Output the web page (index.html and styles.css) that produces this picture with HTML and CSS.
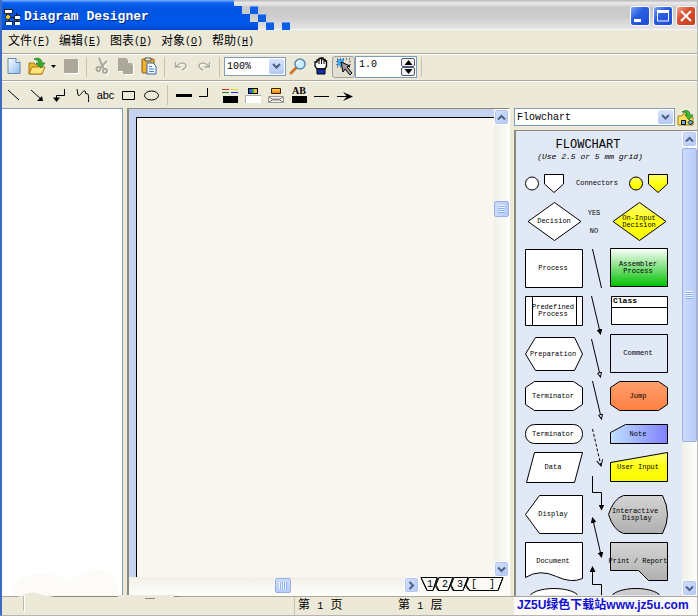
FILE: index.html
```html
<!DOCTYPE html>
<html lang="zh-CN">
<head>
<meta charset="utf-8">
<title>Diagram Designer</title>
<link rel="stylesheet" href="styles.css">
</head>
<body>
<div class="window">
  <header class="titlebar">
    <div class="title">
      <svg class="app-icon" width="16" height="16" viewBox="0 0 16 16" shape-rendering="crispEdges">
        <path d="M4 3v9M4 8h7M12 4v8" stroke="#111" fill="none"/>
        <path d="M0 0h8v4H0zM10 6h6v4h-6zM1 12h7v4H1zM10 12h6v4h-6z" fill="#fff" stroke="#222"/>
        <path d="M4 5l3 3-3 3-3-3z" fill="#f8d020" stroke="#333"/>
      </svg>
      <h1>Diagram Designer</h1>
    </div>
    <svg class="steps" width="64" height="30" viewBox="0 0 64 30" shape-rendering="crispEdges">
      <defs><linearGradient id="bar" gradientUnits="userSpaceOnUse" x1="0" y1="0" x2="0" y2="30"><stop offset="0" stop-color="#7cb0f8"/><stop offset=".1" stop-color="#0c60f0"/><stop offset=".3" stop-color="#0054e0"/><stop offset=".8" stop-color="#0058ec"/><stop offset="1" stop-color="#0048c8"/></linearGradient></defs>
      <path d="M0 0v30h24v-8h-8v-8H8V6H0z" fill="url(#bar)"/>
      <path d="M16 6h8v8h-8z M24 14h8v8h-8z M32 22h8v8h-8z M48 22h8v8h-8z" fill="#0a5ee8"/>
      <path d="M16 6.500h8M24 14.500h8M32 22.500h8M48 22.500h8" stroke="#5a9cf8"/>
    </svg>
    <div class="window-buttons">
      <button class="wbtn" aria-label="Minimize"><svg width="18" height="18" viewBox="0 0 18 18"><path d="M3 12h7v3H3z" fill="#fff"/></svg></button>
      <button class="wbtn" aria-label="Maximize"><svg width="18" height="18" viewBox="0 0 18 18"><path d="M3.500 4h11v10h-11z" fill="none" stroke="#fff"/><path d="M3 3h12v3H3z" fill="#fff"/></svg></button>
      <button class="wbtn close" aria-label="Close"><svg width="18" height="18" viewBox="0 0 18 18"><path d="M4 4l10 10M14 4L4 14" stroke="#fff" stroke-width="2"/></svg></button>
    </div>
  </header>

  <nav class="menubar">
    <button>文件<span>(<u>F</u>)</span></button>
    <button>编辑<span>(<u>E</u>)</span></button>
    <button>图表<span>(<u>D</u>)</span></button>
    <button>对象<span>(<u>O</u>)</span></button>
    <button>帮助<span>(<u>H</u>)</span></button>
  </nav>

  <div class="toolbar">
    <button class="tool" aria-label="New"><svg width="20" height="20" viewBox="0 0 20 20"><defs><linearGradient id="doc" x1="0" y1="0" x2="1" y2="1"><stop offset="0" stop-color="#fff"/><stop offset="1" stop-color="#8ebcf0"/></linearGradient></defs><path d="M4 1.500h8l4 4v11H4z" fill="url(#doc)" stroke="#5f86b8"/><path d="M12 1.500v4h4" fill="#fff" stroke="#5f86b8"/></svg></button>
    <button class="tool" aria-label="Open"><svg width="20" height="20" viewBox="0 0 20 20"><path d="M2 17V6h5l2 2h6v9z" fill="#e8b830" stroke="#a87810"/><path d="M2 17l3-7h13l-3 7z" fill="#ffe480" stroke="#a87810"/><path d="M7 2c5-2 8 0 8 4h3l-4 5-5-5h3c0-2-2-3-5-4z" fill="#35b030" stroke="#187018" stroke-width=".7"/></svg></button>
    <button class="caret" aria-label="Open recent"><svg width="7" height="4" viewBox="0 0 7 4"><path d="M1 0h5L3.500 3z"/></svg></button>
    <button class="tool" aria-label="Save"><svg width="20" height="20" viewBox="0 0 20 20"><rect x="4" y="3" width="14" height="14" rx="1" fill="#fff"/><rect x="3" y="2" width="14" height="14" rx="1" fill="#aca899"/></svg></button>
    <i class="sep"></i>
    <button class="tool" aria-label="Cut"><svg width="20" height="20" viewBox="0 0 20 20"><g transform="translate(1 0)" fill="none" stroke="#fff" stroke-width="2"><path d="M6 2l5 9M14 5l-8 6"/><circle cx="6" cy="12" r="2"/><circle cx="12" cy="15" r="2"/></g><g fill="none" stroke="#aca899" stroke-width="2"><path d="M6 1l5 11M14 4l-7 7"/><circle cx="5.500" cy="12" r="2"/><circle cx="12" cy="14" r="2"/></g></svg></button>
    <button class="tool" aria-label="Copy"><svg width="20" height="20" viewBox="0 0 20 20"><path d="M3 3h8l2 4h5v11h-9v-3H3z" fill="#fff"/><path d="M2 1h8l2 2v3h3l2 2v9H7v-3H2z" fill="#aca899"/></svg></button>
    <button class="tool" aria-label="Paste"><svg width="20" height="20" viewBox="0 0 20 20"><rect x="3" y="2" width="12" height="14" rx="1" fill="#f0b030" stroke="#8a5a10"/><path d="M6 4V1h6v3z" fill="#e8e4d0" stroke="#555"/><path d="M8 6h6l3 3v8H8z" fill="#f4faff" stroke="#3a66b0"/><path d="M10 9.500h3M10 12h5M10 14.500h5" stroke="#4a80d0"/></svg></button>
    <i class="sep"></i>
    <button class="tool" aria-label="Undo"><svg width="20" height="20" viewBox="0 0 20 20" fill="none"><path d="M4.500 5v5h5M5 10c3-5 10-5 10-1 0 2-2 3-4 4" stroke="#fff" transform="translate(1 1)"/><path d="M4.500 5v5h5M5 10c3-5 10-5 10-1 0 2-2 3-4 4" stroke="#aca899" stroke-width="1.400"/></svg></button>
    <button class="tool" aria-label="Redo"><svg width="20" height="20" viewBox="0 0 20 20" fill="none"><path d="M15.500 5v5h-5M15 10c-3-5-10-5-10-1 0 2 2 3 4 4" stroke="#fff" transform="translate(1 1)"/><path d="M15.500 5v5h-5M15 10c-3-5-10-5-10-1 0 2 2 3 4 4" stroke="#aca899" stroke-width="1.400"/></svg></button>
    <i class="sep"></i>
    <div class="combo zoom">
      <select aria-label="Zoom"><option>100%</option></select>
      <span class="drop"><svg width="9" height="7" viewBox="0 0 9 7"><path d="M1 1l3.500 3.500L8 1" fill="none" stroke="#4d6185" stroke-width="2"/></svg></span>
    </div>
    <button class="tool" aria-label="Magnifier"><svg width="20" height="20" viewBox="0 0 20 20"><path d="M8 11l-5 5" stroke="#d07828" stroke-width="3" stroke-linecap="round"/><circle cx="12" cy="7" r="5" fill="#c8ecfc" stroke="#5888b0" stroke-width="1.500"/><path d="M9 7c0-2 2-3 3-3" stroke="#fff" fill="none" stroke-width="1.500"/></svg></button>
    <button class="tool" aria-label="Pan"><svg width="20" height="20" viewBox="0 0 20 20"><path d="M6 12L4 9V5h2V3h2V1.500h2V1h2v1.500h2V4h1.500v5L14 12z" fill="#fff" stroke="#000" stroke-width="1.300"/><path d="M8 3v4M10.500 2v5M13 3v4" stroke="#000"/><path d="M6 12h8v5H6z" fill="#1030b0" stroke="#000"/></svg></button>
    <button class="tool pressed" aria-label="Select"><svg width="20" height="20" viewBox="0 0 20 20"><path d="M3 2h7v7H3z" fill="#48a8f0"/><path d="M3 2h13v8H3z" fill="none" stroke="#222" stroke-dasharray="1 2"/><path d="M7 5l9 4-3 1 5 6-2 2-5-6-2 3z" fill="#999" stroke="#000"/></svg></button>
    <div class="spin">
      <input type="text" value="1.0" aria-label="Line width">
      <div class="spin-buttons">
        <button aria-label="Increase"><svg width="9" height="5" viewBox="0 0 9 5"><path d="M4.500 0L8.500 5h-8z"/></svg></button>
        <button aria-label="Decrease"><svg width="9" height="5" viewBox="0 0 9 5"><path d="M4.500 5L8.500 0h-8z"/></svg></button>
      </div>
    </div>
    <i class="sep"></i>
  </div>

  <div class="toolbar shapes">
    <button class="tool" aria-label="Line"><svg width="20" height="20" viewBox="0 0 20 20"><path d="M4 5l11 10" stroke="#000"/></svg></button>
    <button class="tool" aria-label="Arrow"><svg width="20" height="20" viewBox="0 0 20 20"><path d="M4 5l10 9" stroke="#000"/><path d="M16 16h-6l5-5z"/></svg></button>
    <button class="tool" aria-label="Elbow connector"><svg width="20" height="20" viewBox="0 0 20 20"><path d="M14.500 4v6.500h-8V14" stroke="#000" fill="none"/><path d="M3 12.500h7L6.500 17z"/></svg></button>
    <button class="tool" aria-label="Curve"><svg width="20" height="20" viewBox="0 0 20 20"><path d="M4 4l1 6c2 3 5-6 7-4l1 3c2-1 3 0 2.500 8" stroke="#000" fill="none"/></svg></button>
    <button class="tool abc">abc</button>
    <button class="tool" aria-label="Rectangle"><svg width="20" height="20" viewBox="0 0 20 20"><path d="M3.500 6.500h12v8h-12z" stroke="#000" fill="none"/></svg></button>
    <button class="tool" aria-label="Ellipse"><svg width="20" height="20" viewBox="0 0 20 20"><ellipse cx="9.500" cy="10.500" rx="7" ry="4.500" stroke="#000" fill="none"/></svg></button>
    <i class="sep"></i>
    <button class="tool" aria-label="Line thickness"><svg width="20" height="20" viewBox="0 0 20 20"><path d="M2 9h16v3H2z"/></svg></button>
    <button class="tool" aria-label="Corner style"><svg width="20" height="20" viewBox="0 0 20 20"><path d="M2 11.500h8.500V3" stroke="#000" fill="none"/></svg></button>
    <button class="tool" aria-label="Line color"><svg width="20" height="20" viewBox="0 0 20 20"><path d="M2 4.500h7" stroke="#d02020"/><path d="M11 4.500h7" stroke="#e8d820"/><path d="M2 7.500h7" stroke="#208030"/><path d="M11 7.500h7" stroke="#2030e0"/><path d="M3 11h15v7H3z"/></svg></button>
    <button class="tool" aria-label="Fill color"><svg width="20" height="20" viewBox="0 0 20 20"><path d="M5 3h10v6H5z"/><path d="M6 4h3v4H6z" fill="#3060e0"/><path d="M9 4h2v4H9z" fill="#30b050"/><path d="M11 4h3v4h-3z" fill="#e8c020"/><path d="M3 11h15v7H3z" fill="#fff"/><path d="M2.500 18v-7.500H18" fill="none" stroke="#aaa"/></svg></button>
    <button class="tool" aria-label="Gradient"><svg width="20" height="20" viewBox="0 0 20 20"><defs><linearGradient id="sun" x1="0" y1="0" x2="0" y2="1"><stop offset="0" stop-color="#ffe040"/><stop offset="1" stop-color="#f07010"/></linearGradient></defs><path d="M5.500 3.500h9v5h-9z" fill="url(#sun)" stroke="#402000"/><path d="M2.500 11.500h15v6h-15z" fill="#f4f2ea" stroke="#999"/><path d="M3 12l5 3h4l5-3M3 17l5-3h4l5 3" stroke="#777" fill="none"/></svg></button>
    <button class="tool" aria-label="Text color"><svg width="20" height="20" viewBox="0 0 20 20"><text class="ab" x="10" y="9">AB</text><path d="M3 11h15v7H3z"/></svg></button>
    <button class="tool" aria-label="Line style"><svg width="20" height="20" viewBox="0 0 20 20"><path d="M2 11.500h15" stroke="#000"/></svg></button>
    <button class="tool" aria-label="Arrow style"><svg width="20" height="20" viewBox="0 0 20 20"><path d="M2 11.500h13" stroke="#000"/><path d="M8 7l10 4.500L8 16l4-4.500z"/></svg></button>
  </div>

  <main class="workspace">
    <aside class="tree"></aside>
    <section class="editor">
      <div class="ruler"><div class="page"></div></div>
      <div class="vscroll">
        <button class="sbtn" aria-label="Scroll up"><svg width="9" height="7" viewBox="0 0 9 7"><path d="M1 5.500L4.500 2 8 5.500"/></svg></button>
        <div class="track"><span class="thumb"></span></div>
        <button class="sbtn" aria-label="Scroll down"><svg width="9" height="7" viewBox="0 0 9 7"><path d="M1 1.500L4.500 5 8 1.500"/></svg></button>
      </div>
      <div class="bottom">
        <div class="hscroll">
          <div class="track"><span class="thumb side"></span></div>
          <button class="sbtn" aria-label="Scroll right"><svg width="7" height="9" viewBox="0 0 7 9"><path d="M1.500 1L5 4.500 1.500 8"/></svg></button>
        </div>
        <svg class="tabs" width="90" height="17" viewBox="0 0 90 17">
          <path d="M2 .500h16l-4 13H8z" fill="#ece9d8" stroke="none"/>
          <path d="M34 .500L29 13.500h-9L17 8 20 .500zM49 .500L44 13.500h-9L32 8l3-7.500zM84 .500L79 13.500H51L47 8l3-7.500z" fill="#fff" stroke="none"/>
          <path d="M2 .500l6 13h6l5-13M16 8l3 5.500h10l5-13M31 8l3 5.500h10l5-13M46 8l4 5.500h29l5-13"/>
          <text x="8" y="10">1</text><text x="23" y="10">2</text><text x="38" y="10">3</text><text x="52" y="10">[</text><text x="70" y="10">]</text>
        </svg>
      </div>
    </section>
    <aside class="library">
      <div class="library-head">
        <div class="combo">
          <select aria-label="Template"><option>Flowchart</option></select>
          <span class="drop"><svg width="9" height="7" viewBox="0 0 9 7"><path d="M1 1l3.500 3.500L8 1" fill="none" stroke="#4d6185" stroke-width="2"/></svg></span>
        </div>
        <button class="load" aria-label="Open template"><svg width="18" height="18" viewBox="0 0 18 18"><path d="M1 16V7h4l1-2h5l1 3h4v8z" fill="#ffe060" stroke="#a08010"/><path d="M5 3c5-3 8-1 8 3h3l-4 5-4-5h2c0-2-2-3-5-3z" fill="#40b838" stroke="#187018" stroke-width=".7"/><path d="M4.500 11.500h4v4h-4zM11 13.500l2.500-2.500 2.500 2.500-2.500 2.500z" fill="#68b8f8" stroke="#000"/></svg></button>
      </div>
      <div class="palette">
        <div class="palette-view">
        <svg class="flow" width="166" height="464" viewBox="516 131 166 464">
          <defs>
            <linearGradient id="yel" x1="0" y1="0" x2="0" y2="1"><stop offset="0" stop-color="#ffff70"/><stop offset=".5" stop-color="#ffff10"/><stop offset="1" stop-color="#f8f800"/></linearGradient>
            <linearGradient id="grn" x1="0" y1="0" x2="0" y2="1"><stop offset="0" stop-color="#fff"/><stop offset="1" stop-color="#00c000"/></linearGradient>
            <linearGradient id="org" x1="0" y1="0" x2="0" y2="1"><stop offset="0" stop-color="#ffa070"/><stop offset="1" stop-color="#ff8040"/></linearGradient>
            <linearGradient id="blu"><stop offset="0" stop-color="#c0e0ff"/><stop offset="1" stop-color="#8080ff"/></linearGradient>
            <linearGradient id="gry" x1="0" y1="0" x2="0" y2="1"><stop offset="0" stop-color="#d4d4d4"/><stop offset="1" stop-color="#b0b0b0"/></linearGradient>
            <marker id="tip" viewBox="0 0 6 6" refX="5" refY="3" markerWidth="6" markerHeight="6" markerUnits="userSpaceOnUse" orient="auto-start-reverse"><path d="M0 0l6 3-6 3z" fill="#000" stroke="none"/></marker>
            <marker id="open" viewBox="0 0 6 6" refX="5" refY="3" markerWidth="6" markerHeight="6" markerUnits="userSpaceOnUse" orient="auto"><path d="M.500 1L5 3 .500 5z" fill="#fff" stroke="#000"/></marker>
            <marker id="vee" viewBox="0 0 7 8" refX="6" refY="4" markerWidth="7" markerHeight="8" markerUnits="userSpaceOnUse" orient="auto"><path d="M0 1l6 3-6 3" fill="none" stroke="#000"/></marker>
          </defs>
          <g class="shape">
            <circle cx="532" cy="183.500" r="6.500"/>
            <path d="M544.500 174.500h19v9.500l-9.500 8.500-9.500-8.500z"/>
            <circle cx="636" cy="183.500" r="6.500" fill="url(#yel)"/>
            <path d="M648.500 174.500h19v9.500l-9.500 8.500-9.500-8.500z" fill="url(#yel)"/>
            <path d="M528 221.500l26.500-19 26.500 19-26.500 19z"/>
            <path d="M613 221.500l26.500-19 26.500 19-26.500 19z" fill="url(#yel)"/>
            <path d="M525.500 249.500h57v38h-57z"/>
            <path d="M610.500 248.500h57v38h-57z" fill="url(#grn)"/>
            <path d="M525.500 296.500h57v29h-57zM532.500 296.500v29M576.500 296.500v29"/>
            <path d="M611.500 296.500h56v28h-56zM611.500 307.500h56"/>
            <path d="M525.500 354l10-16.500h39l8 16.500-8 16.500h-39z"/>
            <path d="M610.500 334.500h57v38h-57z" fill="none"/>
            <path d="M525.500 387.500l9-6h39l9 6v17l-9 6h-39l-9-6z"/>
            <path d="M610.500 387.500l9-6h39l9 6v17l-9 6h-39l-9-6z" fill="url(#org)"/>
            <rect x="525.500" y="424.500" width="57" height="19" rx="9"/>
            <path d="M610.500 443.500v-11l15-8h42v19z" fill="url(#blu)"/>
            <path d="M534.500 452.500h48l-8 30h-48z"/>
            <path d="M610.500 462.500l57-10v29h-57z" fill="url(#yel)"/>
            <path d="M525.500 514.500l14-19h43v38h-43z"/>
            <path d="M623.500 495.500h39q10 19 0 38h-39q-10-3-15-19 5-16 15-19z" fill="url(#gry)"/>
            <path d="M525.500 542.500h57v36q-11 5-26-2-17-8-31 1z"/>
            <path d="M610.500 542.500h57v38h-19l-10-10h-28z" fill="url(#gry)"/>
            <ellipse cx="554" cy="598" rx="25" ry="9.500"/>
            <ellipse cx="636" cy="598" rx="25" ry="9.500" fill="url(#gry)"/>
          </g>
          <g class="wire">
            <path d="M592.500 249l9 39"/>
            <path d="M591.500 296l9 38" marker-end="url(#tip)"/>
            <path d="M591.500 339l9 38" marker-end="url(#open)"/>
            <path d="M592.500 381l9 38" marker-end="url(#open)"/>
            <path d="M592.500 429l8.500 37" stroke-dasharray="3 2" marker-end="url(#vee)"/>
            <path d="M592.500 476v16.500h9v17" marker-end="url(#tip)"/>
            <path d="M592.500 518l9 39" marker-start="url(#tip)" marker-end="url(#tip)"/>
            <path d="M601.500 600v-15.500h-9V567" marker-end="url(#tip)"/>
          </g>
          <g class="label">
            <text class="head" x="588" y="148">FLOWCHART</text>
            <text class="sub" x="590" y="159">(Use 2.5 or 5 mm grid)</text>
            <text x="597" y="185">Connectors</text>
            <text x="554" y="223">Decision</text>
            <text x="594" y="215">YES</text><text x="594" y="233">NO</text>
            <text x="639" y="220">On-Input</text><text x="639" y="227">Decision</text>
            <text x="553" y="270">Process</text>
            <text x="638" y="266">Assembler</text><text x="638" y="273">Process</text>
            <text x="553" y="309">Predefined</text><text x="553" y="316">Process</text>
            <text class="class" x="625" y="303">Class</text>
            <text x="553" y="356">Preparation</text><text x="638" y="355">Comment</text>
            <text x="553" y="398">Terminator</text><text x="638" y="398">Jump</text>
            <text x="553" y="436">Terminator</text><text x="638" y="436">Note</text>
            <text x="553" y="469">Data</text><text x="638" y="469">User Input</text>
            <text x="553" y="516">Display</text>
            <text x="635" y="513">Interactive</text><text x="637" y="520">Display</text>
            <text x="553" y="563">Document</text><text x="638" y="563">Print / Report</text>
          </g>
        </svg>
        </div>
        <div class="vscroll">
          <button class="sbtn" aria-label="Scroll palette up"><svg width="9" height="7" viewBox="0 0 9 7"><path d="M1 5.500L4.500 2 8 5.500"/></svg></button>
          <div class="track"><span class="thumb tall"></span></div>
          <button class="sbtn" aria-label="Scroll palette down"><svg width="9" height="7" viewBox="0 0 9 7"><path d="M1 1.500L4.500 5 8 1.500"/></svg></button>
        </div>
      </div>
    </aside>
  </main>

  <footer class="status">
    <span class="cell hint"></span>
    <span class="cell pageno">第 <b>1</b> 页</span>
    <span class="cell layer">第 <b>1</b> 层</span>
    <a class="site" href="#">JZ5U绿色下载站www.jz5u.com</a>
  </footer>
  <svg class="haze" width="180" height="60" viewBox="0 0 180 60">
    <path d="M12 38q0-18 28-19 22 0 26 7 14-9 34-11 18 0 18 22v4H12z" fill="#fcfbf7"/>
    <path d="M3 54q8-10 20-14 10-5 20 0l10 2h65v-2h57v2h5v13H3z" fill="#ece9d8"/>
    <path d="M52 38.500h66M175 38.500h5" stroke="#fffef8"/>
    <path d="M53 41.500h65M174 41.500h6" stroke="#8c8a7c"/>
    <path d="M145 43.500h10" stroke="#8c8a7c"/>
    <path d="M24.500 41v16" stroke="#fff"/><path d="M23.500 41v14" stroke="#bdb9a8"/>
  </svg>
</div>
</body>
</html>
```
FILE: styles.css
```css
* { box-sizing: border-box; }
body { margin: 0; font-family: "Liberation Mono", "Noto Sans CJK SC", monospace; font-size: 10px; color: #000; }
button { padding: 0; border: 0; background: none; font: inherit; color: inherit; }
svg { display: block; flex: none; }

.window { position: relative; display: flex; flex-direction: column; height: 100vh; overflow: hidden; background: #ece9d8; border-left: 2px solid #3a6cc4; border-right: 1px solid #b8b8b8; border-bottom: 1px solid #b8b4b4; }

.titlebar { display: flex; flex: none; height: 30px; margin-left: -2px; background: linear-gradient(#b8b8b8, #ececec 10%, #c8c8c8 25%, #cccccc 55%, #e4e4e4 95%, #fff); }
.title { display: flex; align-items: center; gap: 4px; width: 234px; padding: 3px 0 0 4px; background: linear-gradient(#7cb0f8, #0c60f0 10%, #0054e0 30%, #0058ec 80%, #0048c8); }
.title h1 { margin: 0; font-size: 13px; line-height: 16px; font-weight: bold; color: #fff; text-shadow: 1px 1px #0a2f88; white-space: nowrap; }
.window-buttons { display: flex; gap: 3px; margin: 6px 1px 0 auto; }
.wbtn { display: grid; place-items: center; width: 20px; height: 20px; border: 1px solid #fff; border-radius: 3px; background: linear-gradient(135deg, #7ca4f4, #2a5ee0 40%, #1c4cd8); }
.wbtn.close { background: linear-gradient(135deg, #f0a088, #dc5030 40%, #c43c18); }

.menubar { display: flex; flex: none; gap: 9px; height: 24px; padding-left: 6px; align-items: center; border-bottom: 1px solid #aca899; }
.menubar button { display: flex; width: 42px; font-size: 12px; line-height: 16px; white-space: nowrap; }
.menubar span { font-size: 10px; }

.toolbar { display: flex; flex: none; align-items: center; height: 27px; padding-bottom: 2px; border-top: 1px solid #fff; border-bottom: 1px solid #aca899; }
.toolbar.shapes { padding-bottom: 0; border-bottom: 0; }
.tool { display: grid; place-items: center; flex: none; width: 23px; height: 22px; }
.tool.pressed { border: 1px solid #98a0a8; border-radius: 3px; background: #e2dfd0; }
.abc { font: 11px "Liberation Sans", sans-serif; }
.caret { display: grid; place-items: center; width: 11px; height: 22px; }
.sep { flex: none; width: 1px; height: 20px; margin: 0 4px; background: #c5c2b2; }
.ab { font: bold 10px "Liberation Serif", serif; text-anchor: middle; }

.combo { position: relative; height: 18px; border: 1px solid #7f9db9; background: #fff; }
.combo select { width: 100%; height: 100%; padding: 0 2px; border: 0; background: none; appearance: none; font: inherit; color: #000; }
.combo.zoom { width: 62px; height: 19px; }
.drop { position: absolute; top: 1px; right: 1px; bottom: 1px; display: grid; place-items: center; width: 15px; border-radius: 2px; background: linear-gradient(#d8e4fc, #b4c8f4); pointer-events: none; }
.spin { display: flex; width: 62px; height: 22px; border: 1px solid #7f9db9; background: #fff; }
.spin input { flex: 1; min-width: 0; padding: 0 3px 4px; border: 0; background: none; font: inherit; }
.spin-buttons { display: flex; flex-direction: column; width: 15px; padding: 1px 1px 1px 0; }
.spin-buttons button { display: grid; place-items: center; flex: 1; border: 1px solid #4a5a78; border-radius: 2px; background: #f4f2ea; }

.workspace { display: flex; flex: 1; min-height: 0; }
.tree { flex: none; width: 121px; border-top: 1px solid #7f9db9; border-right: 1px solid #7f9db9; background: #fff; }
.editor { display: grid; flex: 1; min-width: 0; margin-left: 4px; grid-template: 1fr 19px / 1fr 15px; border-top: 1px solid #8c8a7c; border-left: 2px solid #8c8a7c; border-right: 1px solid #fff; }
.ruler { padding: 8px 0 0 7px; background: #c6d3ef; }
.page { height: 100%; border-top: 1px solid #000; border-left: 1px solid #000; background: #f9f6f0; }
.vscroll { display: flex; flex-direction: column; width: 15px; background: linear-gradient(90deg, #f0efe8, #fefefb); }
.sbtn { display: grid; place-items: center; flex: none; width: 15px; height: 16px; border: 1px solid #fff; border-radius: 3px; background: linear-gradient(135deg, #d4e0fc, #b4c8f6); box-shadow: inset 0 0 0 1px #b4c6ee; }
.sbtn path { fill: none; stroke: #4d6185; stroke-width: 2; }
.track { flex: 1; min-height: 0; }
.vscroll .thumb { display: block; width: 15px; height: 16px; margin-top: 76px; border: 1px solid #98b0e4; border-radius: 2px; background: repeating-linear-gradient(#eef4fe 0 1px, #8cb0f8 1px 2px) center / 7px 8px no-repeat, linear-gradient(90deg, #ccdafc, #b8ccf8); }
.vscroll .thumb.tall { height: 68%; margin-top: 1px; }
.bottom { display: flex; grid-column: 1 / -1; background: #fbfaf5; }
.hscroll { display: flex; flex: 1; min-width: 0; background: linear-gradient(#f0efe8, #fefefb); }
.hscroll .track { display: flex; justify-content: center; padding-left: 32px; }
.thumb.side { width: 16px; height: 15px; margin-top: 1px; border: 1px solid #98b0e4; border-radius: 2px; background: repeating-linear-gradient(90deg, #eef4fe 0 1px, #8cb0f8 1px 2px) center / 8px 7px no-repeat, linear-gradient(#ccdafc, #b8ccf8); }
.tabs { background: #fbfaf5; }
.tabs path { fill: none; stroke: #000; }
.tabs text { font-size: 10px; }

.library { display: flex; flex-direction: column; flex: none; width: 183px; margin-left: 4px; }
.library-head { display: flex; gap: 2px; height: 22px; }
.library-head .combo { flex: 1; }
.load { width: 20px; height: 20px; }
.palette { display: flex; flex: 1; min-height: 0; border-top: 1px solid #8c8a7c; border-left: 2px solid #8c8a7c; }
.palette-view { flex: 1; min-width: 0; overflow: hidden; background: #e1e9f7; }
.shape > * { stroke: #000; }
.shape > :not([fill]) { fill: #fff; }
.wire path { fill: none; stroke: #000; }
.label text { font-size: 7px; text-anchor: middle; }
.label .head { font-size: 12px; }
.label .sub { font-size: 8px; font-style: italic; }
.label .class { font-size: 8px; font-weight: bold; }

.status { display: flex; flex: none; height: 19px; border-top: 1px solid #aca899; font-size: 12px; line-height: 17px; white-space: nowrap; }
.status b { font-size: 10px; font-weight: normal; }
.cell { padding-top: 1px; }
.hint { flex: 1; border-right: 1px solid #c5c2b2; }
.pageno, .layer { width: 100px; padding-left: 3px; }
.layer { width: 119px; }
.site { width: 183px; padding-left: 3px; background: #fbfaf6; font: bold 12px/17px "Liberation Sans", "Noto Sans CJK SC", sans-serif; color: #1010d0; text-decoration: none; }
.haze { position: absolute; left: -2px; bottom: 0; pointer-events: none; }
```
